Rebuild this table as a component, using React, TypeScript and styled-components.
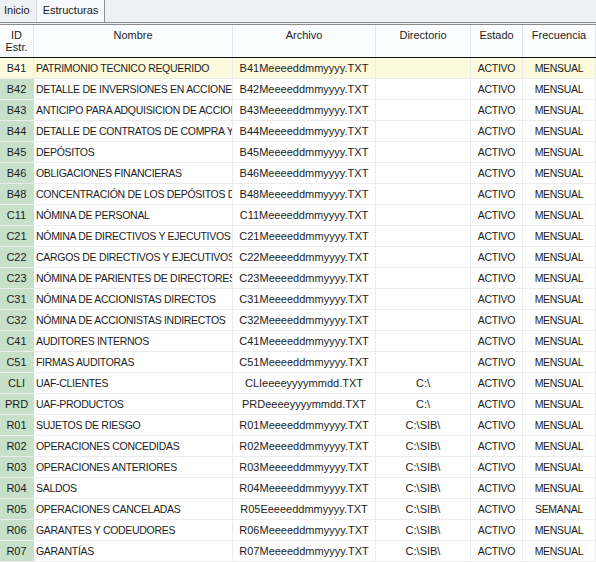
import React from "react";
import styled, { createGlobalStyle } from "styled-components";

const Global = createGlobalStyle`
  html, body { margin: 0; padding: 0; background: #ffffff; overflow: hidden; }
  body { font-family: "Liberation Sans", Arial, sans-serif; font-size: 11px; color: #1c1c1c; }
`;

const Page = styled.div`
  width: 596px;
  height: 562px;
  overflow: hidden;
  display: flex;
  flex-direction: column;
  background: #ffffff;
`;

const TabBar = styled.div`
  display: flex;
  align-items: stretch;
  height: 22px;
  background: #eef0f3;
  border-bottom: 3px double #8c8c8c;
  box-sizing: content-box;
`;

const Tab = styled.div<{ $active?: boolean }>`
  display: flex;
  align-items: center;
  padding: ${(p) => (p.$active ? "0 6px 2px 6px" : "0 4px 2px 4px")};
  margin-left: ${(p) => (p.$active ? "2px" : "0")};
  background: ${(p) => (p.$active ? "#f7f9fc" : "transparent")};
  border-left: ${(p) => (p.$active ? "1px solid #d6dbe2" : "none")};
  border-right: ${(p) => (p.$active ? "1px solid #8e9297" : "none")};
  color: #1a1a1a;
  font-size: 11px;
`;

const COLS = "34px 199px 143px 95px 52px 1fr";

const HeaderRow = styled.div`
  display: grid;
  grid-template-columns: ${COLS};
  height: 32px;
  background: #fcfdfe;
  border-bottom: 1px solid #101010;
`;

const HeadCell = styled.div`
  border-right: 1px solid #e3e7ec;
  text-align: center;
  padding-top: 4px;
  line-height: 12px;
  font-size: 11px;
  color: #1c1c1c;
  overflow: hidden;
`;

const Body = styled.div`
  display: flex;
  flex-direction: column;
`;

const Row = styled.div<{ $selected?: boolean }>`
  display: grid;
  grid-template-columns: ${COLS};
  height: 21px;
  box-sizing: border-box;
  border-bottom: 1px solid #ececec;
  background: ${(p) => (p.$selected ? "#fcfadd" : "#ffffff")};
`;

const Cell = styled.div<{ $align?: "left" | "center"; $caps?: boolean }>`
  display: flex;
  align-items: center;
  justify-content: ${(p) => (p.$align === "left" ? "flex-start" : "center")};
  padding-left: ${(p) => (p.$align === "left" ? "2px" : "0")};
  border-right: 1px solid #ececec;
  white-space: nowrap;
  overflow: hidden;
  text-overflow: clip;
  font-size: ${(p) => (p.$caps ? "10.5px" : "11px")};
  letter-spacing: ${(p) => (p.$caps ? "-0.3px" : "0")};
  color: #1c1c1c;
`;

const IdCell = styled(Cell)<{ $selected?: boolean }>`
  background: ${(p) => (p.$selected ? "#fcfadd" : "#c7e0c9")};
  border-right: 1px solid ${(p) => (p.$selected ? "#ececec" : "#c7e0c9")};
`;

type R = [string, string, string, string, string, string];

const rows: R[] = [
  ["B41", "PATRIMONIO TECNICO REQUERIDO", "B41Meeeeddmmyyyy.TXT", "", "ACTIVO", "MENSUAL"],
  ["B42", "DETALLE DE INVERSIONES EN ACCIONES", "B42Meeeeddmmyyyy.TXT", "", "ACTIVO", "MENSUAL"],
  ["B43", "ANTICIPO PARA ADQUISICION DE ACCIONES", "B43Meeeeddmmyyyy.TXT", "", "ACTIVO", "MENSUAL"],
  ["B44", "DETALLE DE CONTRATOS DE COMPRA Y VENTA", "B44Meeeeddmmyyyy.TXT", "", "ACTIVO", "MENSUAL"],
  ["B45", "DEPÓSITOS", "B45Meeeeddmmyyyy.TXT", "", "ACTIVO", "MENSUAL"],
  ["B46", "OBLIGACIONES FINANCIERAS", "B46Meeeeddmmyyyy.TXT", "", "ACTIVO", "MENSUAL"],
  ["B48", "CONCENTRACIÓN DE LOS DEPÓSITOS DE", "B48Meeeeddmmyyyy.TXT", "", "ACTIVO", "MENSUAL"],
  ["C11", "NÓMINA DE PERSONAL", "C11Meeeeddmmyyyy.TXT", "", "ACTIVO", "MENSUAL"],
  ["C21", "NÓMINA DE DIRECTIVOS Y EJECUTIVOS", "C21Meeeeddmmyyyy.TXT", "", "ACTIVO", "MENSUAL"],
  ["C22", "CARGOS DE DIRECTIVOS Y EJECUTIVOS", "C22Meeeeddmmyyyy.TXT", "", "ACTIVO", "MENSUAL"],
  ["C23", "NÓMINA  DE PARIENTES DE DIRECTORES", "C23Meeeeddmmyyyy.TXT", "", "ACTIVO", "MENSUAL"],
  ["C31", "NÓMINA DE ACCIONISTAS DIRECTOS", "C31Meeeeddmmyyyy.TXT", "", "ACTIVO", "MENSUAL"],
  ["C32", "NÓMINA DE ACCIONISTAS INDIRECTOS", "C32Meeeeddmmyyyy.TXT", "", "ACTIVO", "MENSUAL"],
  ["C41", "AUDITORES INTERNOS", "C41Meeeeddmmyyyy.TXT", "", "ACTIVO", "MENSUAL"],
  ["C51", "FIRMAS AUDITORAS", "C51Meeeeddmmyyyy.TXT", "", "ACTIVO", "MENSUAL"],
  ["CLI", "UAF-CLIENTES", "CLIeeeeyyyymmdd.TXT", "C:\\", "ACTIVO", "MENSUAL"],
  ["PRD", "UAF-PRODUCTOS", "PRDeeeeyyyymmdd.TXT", "C:\\", "ACTIVO", "MENSUAL"],
  ["R01", "SUJETOS DE RIESGO", "R01Meeeeddmmyyyy.TXT", "C:\\SIB\\", "ACTIVO", "MENSUAL"],
  ["R02", "OPERACIONES CONCEDIDAS", "R02Meeeeddmmyyyy.TXT", "C:\\SIB\\", "ACTIVO", "MENSUAL"],
  ["R03", "OPERACIONES ANTERIORES", "R03Meeeeddmmyyyy.TXT", "C:\\SIB\\", "ACTIVO", "MENSUAL"],
  ["R04", "SALDOS", "R04Meeeeddmmyyyy.TXT", "C:\\SIB\\", "ACTIVO", "MENSUAL"],
  ["R05", "OPERACIONES CANCELADAS", "R05Eeeeeddmmyyyy.TXT", "C:\\SIB\\", "ACTIVO", "SEMANAL"],
  ["R06", "GARANTES Y CODEUDORES", "R06Meeeeddmmyyyy.TXT", "C:\\SIB\\", "ACTIVO", "MENSUAL"],
  ["R07", "GARANTÍAS", "R07Meeeeddmmyyyy.TXT", "C:\\SIB\\", "ACTIVO", "MENSUAL"],
];

export default function App() {
  return (
    <Page>
      <Global />
      <TabBar>
        <Tab>Inicio</Tab>
        <Tab $active>Estructuras</Tab>
      </TabBar>
      <HeaderRow>
        <HeadCell>
          ID
          <br />
          Estr.
        </HeadCell>
        <HeadCell>Nombre</HeadCell>
        <HeadCell>Archivo</HeadCell>
        <HeadCell>Directorio</HeadCell>
        <HeadCell>Estado</HeadCell>
        <HeadCell>Frecuencia</HeadCell>
      </HeaderRow>
      <Body>
        {rows.map((r, i) => (
          <Row key={r[0]} $selected={i === 0}>
            <IdCell $selected={i === 0}>{r[0]}</IdCell>
            <Cell $align="left" $caps>{r[1]}</Cell>
            <Cell>{r[2]}</Cell>
            <Cell>{r[3]}</Cell>
            <Cell $caps>{r[4]}</Cell>
            <Cell $caps>{r[5]}</Cell>
          </Row>
        ))}
      </Body>
    </Page>
  );
}
